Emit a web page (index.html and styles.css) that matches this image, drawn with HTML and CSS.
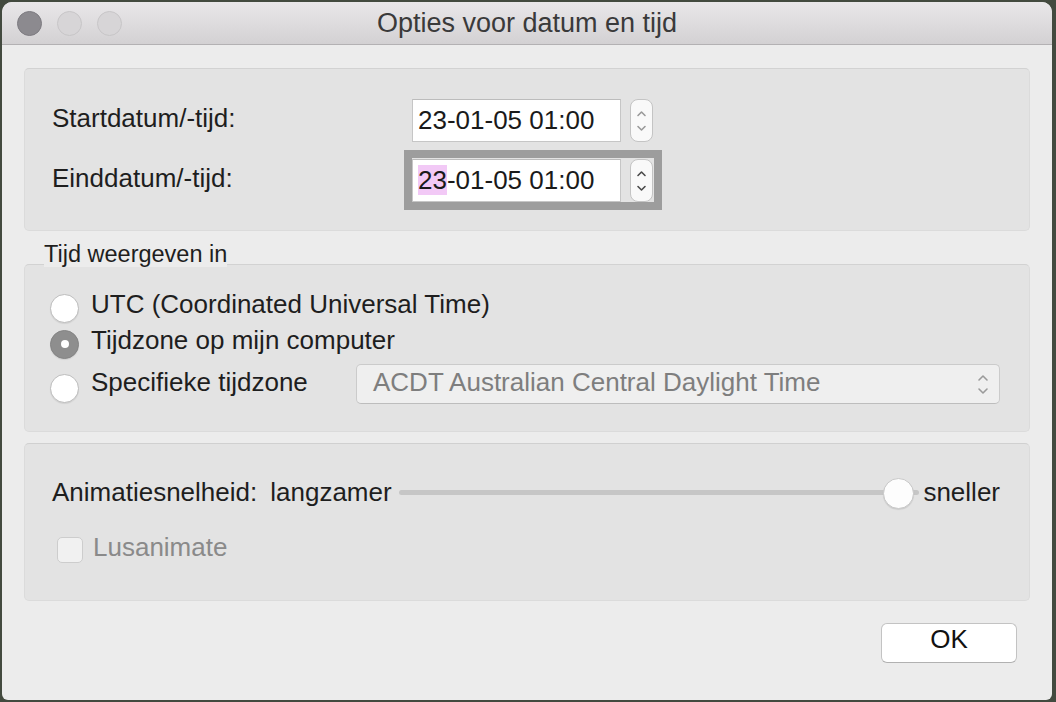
FILE: index.html
```html
<!DOCTYPE html>
<html lang="nl">
<head>
<meta charset="utf-8">
<title>Opties voor datum en tijd</title>
<link rel="stylesheet" href="styles.css">
</head>
<body>
<div class="window">
  <div class="titlebar">
    <div class="lights">
      <span class="light close"></span>
      <span class="light"></span>
      <span class="light"></span>
    </div>
    <div class="title">Opties voor datum en tijd</div>
    <div></div>
  </div>
  <div class="content">
    <div class="panel dates">
      <div class="date-row">
        <div class="label">Startdatum/-tijd:</div>
        <div class="field">
          <div class="input">23-01-05 01:00</div>
          <div class="stepper">
            <svg width="23" height="43" viewBox="0 0 23 43"><path class="chev light-chev" d="M8 16.5 L11.5 13 L15 16.5 M8 27.5 L11.5 31 L15 27.5"/></svg>
          </div>
        </div>
      </div>
      <div class="date-row">
        <div class="label">Einddatum/-tijd:</div>
        <div class="field focus">
          <div class="input"><span class="sel">23</span>-01-05 01:00</div>
          <div class="stepper">
            <svg width="23" height="43" viewBox="0 0 23 43"><path class="chev" d="M8 16.5 L11.5 13 L15 16.5 M8 27.5 L11.5 31 L15 27.5"/></svg>
          </div>
        </div>
      </div>
    </div>

    <div class="group-label">Tijd weergeven in</div>
    <div class="panel zones">
      <div class="opt">
        <span class="radio"></span>
        <span class="opt-text">UTC (Coordinated Universal Time)</span>
      </div>
      <div class="opt">
        <span class="radio on"><span class="dot"></span></span>
        <span class="opt-text">Tijdzone op mijn computer</span>
      </div>
      <div class="opt opt-select">
        <span class="radio"></span>
        <span class="opt-text fixed">Specifieke tijdzone</span>
        <div class="select">
          <span>ACDT Australian Central Daylight Time</span>
          <svg width="14" height="30" viewBox="0 0 14 30"><path class="chev light-chev" d="M3 11 L7 7 L11 11 M3 20 L7 24 L11 20"/></svg>
        </div>
      </div>
    </div>

    <div class="panel anim">
      <div class="slider-row">
        <span class="slider-label">Animatiesnelheid:</span>
        <span>langzamer</span>
        <div class="track"><span class="thumb" style="left: 93%"></span></div>
        <span>sneller</span>
      </div>
      <div class="check-row">
        <span class="checkbox"></span>
        <span>Lusanimate</span>
      </div>
    </div>

    <div class="actions">
      <button class="btn">OK</button>
    </div>
  </div>
</div>
</body>
</html>
```

FILE: styles.css
```css
* { box-sizing: border-box; }

html, body {
  margin: 0;
  height: 100%;
}

body {
  background: #434a3f;
  padding: 2px 4px 2px 2px;
  font-family: "Liberation Sans", Arial, sans-serif;
  color: #1e1e1e;
}

.window {
  width: 1050px;
  height: 698px;
  background: #ececec;
  border-radius: 10px 10px 6px 6px;
  overflow: hidden;
  display: flex;
  flex-direction: column;
}

.titlebar {
  flex: none;
  height: 43px;
  background: linear-gradient(#e9e7e9, #d3d1d3);
  border-bottom: 1px solid #b3b1b3;
  display: grid;
  grid-template-columns: 1fr auto 1fr;
  align-items: center;
}

.lights {
  display: flex;
  gap: 15px;
  padding-left: 15px;
}

.light {
  width: 25px;
  height: 25px;
  border-radius: 50%;
  background: #d7d5d7;
  border: 1px solid #c7c5c7;
}

.light.close {
  background: #8c8a8f;
  border-color: #7d7b80;
}

.title {
  font-size: 27px;
  color: #3a3a3a;
  padding-top: 1px;
}

.content {
  flex: 1;
  padding: 23px 22px 0 22px;
  display: flex;
  flex-direction: column;
}

.panel {
  background: #e3e3e3;
  border: 1px solid #dbdbdb;
  border-top-color: #d2d2d2;
  border-radius: 5px;
}

/* dates panel */
.dates {
  padding: 21px 0 20px 27px;
}

.date-row {
  display: flex;
  align-items: center;
  height: 60px;
}

.label {
  width: 352px;
  font-size: 26px;
  margin-top: -3px;
}

.field {
  display: flex;
  align-items: center;
  gap: 9px;
  height: 60px;
  border: 8px solid transparent;
  padding-right: 1px;
}

.field.focus {
  border-color: #9d9d9d;
}

.input {
  width: 209px;
  height: 43px;
  background: #fff;
  border: 1px solid #c6c6c6;
  border-top-color: #bcbcbc;
  font-size: 26px;
  line-height: 40px;
  padding-left: 5px;
  color: #1a1a1a;
}

.sel {
  background: #f2c9f6;
}

.stepper {
  width: 23px;
  height: 43px;
  border: 1px solid #c4c4c4;
  border-radius: 8px;
  background: #f9f9f9;
  display: flex;
  align-items: center;
  justify-content: center;
}

.stepper svg {
  display: block;
  flex: none;
}

.chev {
  fill: none;
  stroke: #4a4a4a;
  stroke-width: 1.6;
  stroke-linecap: round;
  stroke-linejoin: round;
}

.chev.light-chev {
  stroke: #9a9a9a;
}

/* time zone group */
.group-label {
  align-self: flex-start;
  position: relative;
  z-index: 1;
  margin: 10px 0 -3px 20px;
  height: 26px;
  line-height: 26px;
  font-size: 23.5px;
  background: #ececec;
  color: #1e1e1e;
}

.zones {
  padding: 21px 29px 27px 25px;
  display: flex;
  flex-direction: column;
}

.opt {
  display: flex;
  align-items: center;
  height: 36px;
  font-size: 26px;
}

.opt-select {
  height: 40px;
  margin-top: 6px;
}

.radio {
  flex: none;
  width: 29px;
  height: 29px;
  border-radius: 50%;
  background: #fff;
  border: 1px solid #bcbcbc;
  box-shadow: 0 1px 1px rgba(0, 0, 0, 0.08);
  margin: 8px 12px 0 0;
  display: flex;
  align-items: center;
  justify-content: center;
}

.radio.on {
  background: #8e8e8e;
  border-color: #848484;
}

.dot {
  width: 8px;
  height: 8px;
  border-radius: 50%;
  background: #fff;
}

.opt-text.fixed {
  width: 265px;
  flex: none;
  margin-top: -4px;
}

.select {
  flex: 1;
  height: 40px;
  border: 1px solid #cbcbcb;
  border-bottom-color: #bdbdbd;
  border-radius: 5px;
  background: #efefef;
  display: flex;
  align-items: center;
  justify-content: space-between;
  padding: 0 9px 0 16px;
  color: #7e7e7e;
  font-size: 26px;
}

.select span {
  margin-top: -4px;
}

.select svg {
  display: block;
  flex: none;
}

/* animation panel */
.anim {
  margin-top: 11px;
  padding: 32px 29px 37px 27px;
  border-top-color: #d0d0d0;
}

.slider-row {
  display: flex;
  align-items: center;
  height: 32px;
  font-size: 26px;
}

.slider-label {
  margin-right: 13px;
}

.track {
  flex: 1;
  position: relative;
  height: 5px;
  margin: 0 4px 0 7px;
  background: #c6c6c6;
  border-radius: 3px;
}

.thumb {
  position: absolute;
  top: 50%;
  width: 31px;
  height: 31px;
  margin-top: -14px;
  border-radius: 50%;
  background: #fdfdfd;
  border: 1px solid #c9c9c9;
  box-shadow: 0 1px 1px rgba(0, 0, 0, 0.1);
}

.check-row {
  display: flex;
  align-items: center;
  height: 26px;
  margin-top: 29px;
  font-size: 26px;
  color: #8a8a8a;
}

.check-row span:last-child {
  margin-top: -6px;
}

.checkbox {
  flex: none;
  width: 26px;
  height: 26px;
  margin: 0 10px 0 5px;
  border: 1px solid #cdcdcd;
  border-radius: 5px;
  background: #f1f1f1;
}

.actions {
  display: flex;
  justify-content: flex-end;
  margin-top: 22px;
  padding-right: 13px;
}

.btn {
  width: 136px;
  height: 40px;
  padding: 0 0 7px 0;
  background: #fff;
  border: 1px solid #c3c3c3;
  border-bottom-color: #b1b1b1;
  border-radius: 6px;
  font-family: "Liberation Sans", Arial, sans-serif;
  font-size: 26px;
  color: #111;
}
```
